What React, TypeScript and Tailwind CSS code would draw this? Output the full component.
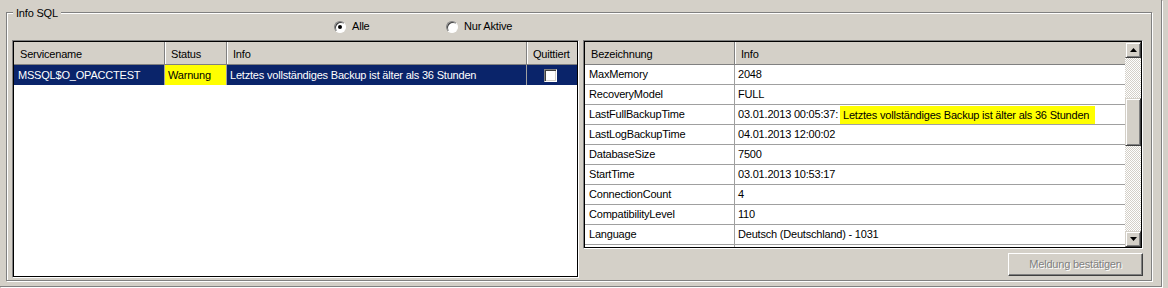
import React from "react";

const rightRows: [string, string | null][] = [
  ["MaxMemory", "2048"],
  ["RecoveryModel", "FULL"],
  ["LastFullBackupTime", null],
  ["LastLogBackupTime", "04.01.2013 12:00:02"],
  ["DatabaseSize", "7500"],
  ["StartTime", "03.01.2013 10:53:17"],
  ["ConnectionCount", "4"],
  ["CompatibilityLevel", "110"],
  ["Language", "Deutsch (Deutschland) - 1031"],
  ["", ""],
];

function Radio({ checked, label, className }: { checked: boolean; label: string; className?: string }) {
  return (
    <div className={"flex items-center gap-[6px] " + (className ?? "")}>
      <div className="w-[12px] h-[12px] rounded-full bg-white border border-t-[#808080] border-l-[#808080] border-r-white border-b-white shadow-[inset_1px_1px_0_#404040] flex items-center justify-center">
        {checked && <div className="w-[4px] h-[4px] rounded-full bg-black" />}
      </div>
      <span className="leading-[13px]">{label}</span>
    </div>
  );
}

function ScrollBtn({ up }: { up: boolean }) {
  return (
    <div className="w-[16px] h-[16px] shrink-0 bg-[#d4d0c8] border border-t-[#d4d0c8] border-l-[#d4d0c8] border-r-[#404040] border-b-[#404040] shadow-[inset_1px_1px_0_#fff,inset_-1px_-1px_0_#808080] flex items-center justify-center">
      <svg width="7" height="4" viewBox="0 0 7 4">
        {up ? <polygon points="3.5,0 7,4 0,4" fill="#000" /> : <polygon points="0,0 7,0 3.5,4" fill="#000" />}
      </svg>
    </div>
  );
}

export default function App() {
  return (
    <div className="w-[1168px] h-[288px] bg-[#d4d0c8] overflow-hidden font-['Liberation_Sans',Arial,sans-serif] text-[11px] tracking-[-0.2px] text-black">
      <div className="w-[1162px] h-[287px] border-r border-b border-[#808080] shadow-[1px_1px_0_#fff] pl-[6px] pt-[12px]">
        {/* Group box */}
        <div className="relative w-[1146px] h-[269px] border border-[#808080] shadow-[inset_1px_1px_0_#fff,1px_1px_0_#fff]">
          <span className="absolute left-[6px] top-[-6px] px-[3px] bg-[#d4d0c8] leading-[13px]">Info SQL</span>

          <div className="h-[27px] flex items-center pl-[327px]">
            <Radio checked label="Alle" className="w-[112px]" />
            <Radio checked={false} label="Nur Aktive" />
          </div>

          <div className="flex pl-[5px] gap-[4px]">
            {/* Left grid */}
            <div className="w-[567px] h-[238px] border border-t-[#808080] border-l-[#808080] border-r-white border-b-white flex">
              <div className="flex-1 border border-black bg-white flex flex-col">
                <div className="h-[23px] flex bg-[#d4d0c8] border-b border-[#808080] leading-[22px]">
                  <div className="w-[151px] pl-[6px] pt-[1px] border-r border-[#808080]">Servicename</div>
                  <div className="w-[62px] pl-[6px] pt-[1px] border-r border-[#808080] shadow-[inset_1px_0_0_#fff]">Status</div>
                  <div className="w-[300px] pl-[6px] pt-[1px] border-r border-[#808080] shadow-[inset_1px_0_0_#fff]">Info</div>
                  <div className="w-[48px] pl-[6px] pt-[1px] shadow-[inset_1px_0_0_#fff]">Quittiert</div>
                </div>
                <div className="h-[20px] flex bg-[#0a246a] text-white leading-[20px]">
                  <div className="w-[151px] pl-[4px] border-r border-[#a0a0a0]">MSSQL$O_OPACCTEST</div>
                  <div className="w-[62px] pl-[3px] bg-[#ffff00] text-black border-r border-[#a0a0a0]">Warnung</div>
                  <div className="w-[300px] pl-[3px] border-r border-[#a0a0a0]">Letztes vollständiges Backup ist älter als 36 Stunden</div>
                  <div className="w-[48px] flex items-center justify-center pr-[1px]">
                    <div className="w-[13px] h-[13px] bg-white border border-t-[#808080] border-l-[#808080] border-r-white border-b-white shadow-[inset_1px_1px_0_#404040,inset_-1px_-1px_0_#d4d0c8]" />
                  </div>
                </div>
              </div>
            </div>

            {/* Right column */}
            <div className="w-[560px] flex flex-col">
              <div className="h-[209px] border border-t-[#808080] border-l-[#808080] border-r-white border-b-white flex">
                <div className="flex-1 border border-black bg-white flex overflow-hidden">
                  <div className="w-[540px] flex flex-col overflow-hidden">
                    <div className="h-[23px] shrink-0 flex bg-[#d4d0c8] border-b border-[#808080] leading-[22px]">
                      <div className="w-[150px] pl-[6px] pt-[1px] border-r border-[#808080]">Bezeichnung</div>
                      <div className="flex-1 pl-[6px] pt-[1px] shadow-[inset_1px_0_0_#fff]">Info</div>
                    </div>
                    {rightRows.map(([k, v], i) => (
                      <div key={i} className="h-[20px] shrink-0 flex border-b border-[#a0a0a0] leading-[19px]">
                        <div className="w-[150px] pl-[4px] border-r border-[#a0a0a0]">{k}</div>
                        <div className="flex-1 pl-[3px] flex items-center whitespace-nowrap">
                          {v === null ? (
                            <>
                              <span>03.01.2013 00:05:37:</span>
                              <span className="ml-[2px] pl-[3px] pr-[6px] bg-[#ffff00] leading-[18px] h-[18px]">Letztes vollständiges Backup ist älter als 36 Stunden</span>
                            </>
                          ) : (
                            <span>{v}</span>
                          )}
                        </div>
                      </div>
                    ))}
                  </div>
                  <div className="w-[16px] flex flex-col">
                    <ScrollBtn up />
                    <div className="flex-1 bg-[image:repeating-conic-gradient(#d4d0c8_0%_25%,#ffffff_0%_50%)] bg-[length:2px_2px]">
                      <div className="mt-[40px] w-[16px] h-[48px] bg-[#d4d0c8] border border-t-[#d4d0c8] border-l-[#d4d0c8] border-r-[#404040] border-b-[#404040] shadow-[inset_1px_1px_0_#fff,inset_-1px_-1px_0_#808080]" />
                    </div>
                    <ScrollBtn up={false} />
                  </div>
                </div>
              </div>
              <div className="mt-[4px] self-end w-[135px] h-[23px] bg-[#d4d0c8] border border-t-white border-l-white border-r-[#404040] border-b-[#404040] shadow-[inset_-1px_-1px_0_#808080] flex items-center justify-center text-[#808080] [text-shadow:1px_1px_0_#fff]">
                Meldung bestätigen
              </div>
            </div>
          </div>
        </div>
      </div>
    </div>
  );
}
